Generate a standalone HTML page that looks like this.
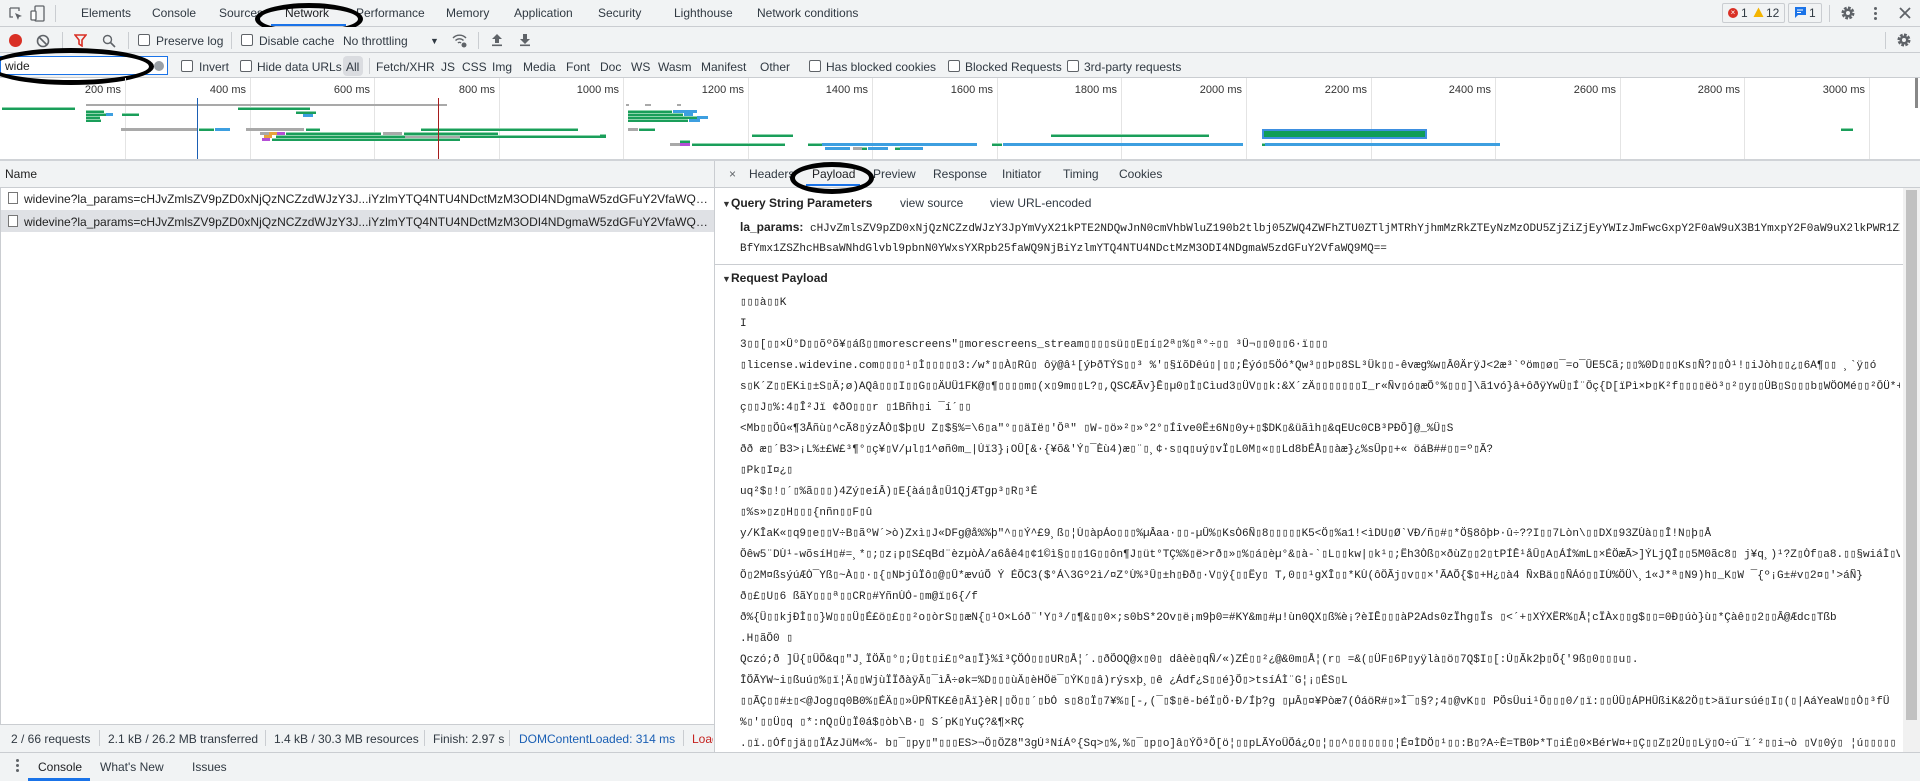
<!DOCTYPE html>
<html><head><meta charset="utf-8">
<style>
*{box-sizing:border-box;margin:0;padding:0}
body{width:1920px;height:781px;overflow:hidden;background:#fff;font-family:"Liberation Sans","DejaVu Sans",sans-serif;font-size:12px;color:#303942;position:relative}
.a{position:absolute;white-space:nowrap;line-height:14px}
.bg{position:absolute}
.hl{position:absolute;height:1px;background:#cacdd1}
.vl{position:absolute;width:1px;background:#cacdd1}
.cb{position:absolute;width:12px;height:12px;border:1px solid #5f6368;border-radius:2px;background:#fff}
.b{position:absolute;height:3px;background:#1a9e5a;border-top:1px solid #8fd3ad}
.bl{position:absolute;height:3px;background:#3d9fe0}
.gr{position:absolute;height:3px;background:#a9a9a9}
.lab{position:absolute;top:84px;font-size:11px;color:#333;text-align:right;width:60px}
.gl{position:absolute;top:78px;width:1px;height:81px;background:#e4e4e4}
.ell{position:absolute;border:5px solid #000;border-radius:50%}
.mono{font-family:"Liberation Mono","DejaVu Sans Mono",monospace;font-size:11px;color:#222}
.pl{position:absolute;left:740px;white-space:nowrap;width:1160px;overflow:hidden;line-height:14px}
.nm{width:688px;overflow:hidden;text-overflow:ellipsis}
</style></head><body>

<!-- Row 1 tabs -->
<div class="bg" style="left:0;top:0;width:1920px;height:27px;background:#f1f3f4"></div>
<div class="hl" style="left:0;top:26px;width:1920px"></div>
<svg class="bg" style="left:8px;top:6px" width="16" height="16" viewBox="0 0 16 16"><path d="M2 2h9v3M2 2v9h3" fill="none" stroke="#5f6368" stroke-width="1.3"/><path d="M7 7l7 3-3 1-1 3z" fill="#5f6368"/></svg>
<svg class="bg" style="left:30px;top:5px" width="16" height="17" viewBox="0 0 16 17"><rect x="5" y="1" width="9" height="15" rx="1" fill="none" stroke="#5f6368" stroke-width="1.3"/><rect x="1" y="6" width="5" height="9" rx="1" fill="#fff" stroke="#5f6368" stroke-width="1.3"/></svg>
<div class="vl" style="left:55px;top:5px;height:17px"></div>
<div class="a" style="left:81px;top:6px">Elements</div>
<div class="a" style="left:152px;top:6px">Console</div>
<div class="a" style="left:219px;top:6px">Sources</div>
<div class="a" style="left:285px;top:6px;color:#202124">Network</div>
<div class="bg" style="left:271px;top:24px;width:75px;height:2px;background:#1a73e8"></div>
<div class="a" style="left:356px;top:6px">Performance</div>
<div class="a" style="left:446px;top:6px">Memory</div>
<div class="a" style="left:514px;top:6px">Application</div>
<div class="a" style="left:598px;top:6px">Security</div>
<div class="a" style="left:674px;top:6px">Lighthouse</div>
<div class="a" style="left:757px;top:6px">Network conditions</div>
<div class="ell" style="left:255px;top:3px;width:108px;height:32px"></div>
<!-- right badges -->
<div class="bg" style="left:1722px;top:3px;width:63px;height:20px;border:1px solid #cacdd1;border-radius:2px"></div>
<div class="bg" style="left:1728px;top:8px;width:10px;height:10px;border-radius:50%;background:#d93025;color:#fff;font-size:8px;line-height:10px;text-align:center">×</div>
<div class="a" style="left:1741px;top:6px">1</div>
<svg class="bg" style="left:1753px;top:7px" width="11" height="11" viewBox="0 0 11 11"><path d="M5.5 0.5L10.5 10H0.5z" fill="#f4b400"/></svg>
<div class="a" style="left:1766px;top:6px">12</div>
<div class="bg" style="left:1788px;top:3px;width:34px;height:20px;border:1px solid #cacdd1;border-radius:2px"></div>
<svg class="bg" style="left:1795px;top:7px" width="11" height="12" viewBox="0 0 11 12"><path d="M0 0h11v8H3l-3 3z" fill="#1a73e8"/><path d="M2 3h6M2 5.5h4" stroke="#fff" stroke-width="1"/></svg>
<div class="a" style="left:1809px;top:6px">1</div>
<div class="vl" style="left:1829px;top:5px;height:17px"></div>
<svg class="bg" style="left:1840px;top:5px" width="16" height="16" viewBox="0 0 16 16"><circle cx="8" cy="8" r="5" fill="none" stroke="#5f6368" stroke-width="3" stroke-dasharray="2.6 1.3"/><circle cx="8" cy="8" r="4.5" fill="#5f6368"/><circle cx="8" cy="8" r="2" fill="#f1f3f4"/></svg>
<div class="bg" style="left:1874px;top:7px;width:3px;height:3px;border-radius:50%;background:#5f6368;box-shadow:0 5px 0 #5f6368,0 10px 0 #5f6368"></div>
<svg class="bg" style="left:1899px;top:7px" width="12" height="12" viewBox="0 0 12 12"><path d="M1 1l10 10M11 1L1 11" stroke="#5f6368" stroke-width="1.8"/></svg>

<!-- Row 2 toolbar -->
<div class="bg" style="left:0;top:27px;width:1920px;height:26px;background:#f1f3f4"></div>
<div class="hl" style="left:0;top:52px;width:1920px"></div>
<div class="bg" style="left:9px;top:34px;width:13px;height:13px;border-radius:50%;background:#d93025"></div>
<svg class="bg" style="left:36px;top:34px" width="14" height="14" viewBox="0 0 14 14"><circle cx="7" cy="7" r="5.5" fill="none" stroke="#5f6368" stroke-width="1.6"/><path d="M3 3l8 8" stroke="#5f6368" stroke-width="1.6"/></svg>
<div class="vl" style="left:62px;top:32px;height:17px"></div>
<svg class="bg" style="left:74px;top:34px" width="13" height="13" viewBox="0 0 13 13"><path d="M1 1h11L8 6v6L5 10V6z" fill="none" stroke="#d93025" stroke-width="1.6"/></svg>
<svg class="bg" style="left:102px;top:34px" width="14" height="14" viewBox="0 0 14 14"><circle cx="5.5" cy="5.5" r="4" fill="none" stroke="#5f6368" stroke-width="1.4"/><path d="M8.5 8.5l4.5 4.5" stroke="#5f6368" stroke-width="1.6"/></svg>
<div class="vl" style="left:128px;top:32px;height:17px"></div>
<div class="cb" style="left:138px;top:34px"></div>
<div class="a" style="left:156px;top:34px">Preserve log</div>
<div class="vl" style="left:231px;top:32px;height:17px"></div>
<div class="cb" style="left:241px;top:34px"></div>
<div class="a" style="left:259px;top:34px">Disable cache</div>
<div class="a" style="left:343px;top:34px">No throttling</div>
<div class="a" style="left:430px;top:34px;font-size:9px">▼</div>
<svg class="bg" style="left:452px;top:33px" width="16" height="15" viewBox="0 0 16 15"><path d="M1 5a9 9 0 0 1 13 0M3.5 7.5a5.5 5.5 0 0 1 8 0M6 10a2 2 0 0 1 3 0" fill="none" stroke="#5f6368" stroke-width="1.4"/><circle cx="12" cy="12" r="2.5" fill="#5f6368"/></svg>
<div class="vl" style="left:478px;top:32px;height:17px"></div>
<svg class="bg" style="left:491px;top:33px" width="12" height="14" viewBox="0 0 12 14"><path d="M6 1L1 6h3v4h4V6h3z" fill="#5f6368"/><rect x="1" y="11.5" width="10" height="1.6" fill="#5f6368"/></svg>
<svg class="bg" style="left:519px;top:33px" width="12" height="14" viewBox="0 0 12 14"><path d="M6 11L1 6h3V1h4v5h3z" fill="#5f6368"/><rect x="1" y="11.5" width="10" height="1.6" fill="#5f6368"/></svg>
<div class="vl" style="left:1885px;top:32px;height:17px"></div>
<svg class="bg" style="left:1896px;top:32px" width="16" height="16" viewBox="0 0 16 16"><circle cx="8" cy="8" r="5" fill="none" stroke="#5f6368" stroke-width="3" stroke-dasharray="2.6 1.3"/><circle cx="8" cy="8" r="4.5" fill="#5f6368"/><circle cx="8" cy="8" r="2" fill="#f1f3f4"/></svg>

<!-- Row 3 filter -->
<div class="bg" style="left:0;top:53px;width:1920px;height:25px;background:#f1f3f4"></div>
<div class="hl" style="left:0;top:77px;width:1920px"></div>
<div class="bg" style="left:0;top:56px;width:168px;height:19px;background:#fff;border:1px solid #1a73e8"></div>
<div class="a" style="left:5px;top:59px;color:#222">wide</div>
<div class="bg" style="left:154px;top:61px;width:10px;height:10px;border-radius:50%;background:#9aa0a6"></div>
<div class="ell" style="left:-12px;top:48px;width:166px;height:37px"></div>
<div class="cb" style="left:181px;top:60px"></div>
<div class="a" style="left:199px;top:60px">Invert</div>
<div class="cb" style="left:240px;top:60px"></div>
<div class="a" style="left:257px;top:60px">Hide data URLs</div>
<div class="bg" style="left:343px;top:56px;width:20px;height:20px;border-radius:4px;background:#dadce0"></div>
<div class="a" style="left:346px;top:60px">All</div>
<div class="vl" style="left:369px;top:58px;height:16px"></div>
<div class="a" style="left:376px;top:60px">Fetch/XHR</div>
<div class="a" style="left:441px;top:60px">JS</div>
<div class="a" style="left:462px;top:60px">CSS</div>
<div class="a" style="left:492px;top:60px">Img</div>
<div class="a" style="left:523px;top:60px">Media</div>
<div class="a" style="left:566px;top:60px">Font</div>
<div class="a" style="left:600px;top:60px">Doc</div>
<div class="a" style="left:631px;top:60px">WS</div>
<div class="a" style="left:658px;top:60px">Wasm</div>
<div class="a" style="left:701px;top:60px">Manifest</div>
<div class="a" style="left:760px;top:60px">Other</div>
<div class="cb" style="left:809px;top:60px"></div>
<div class="a" style="left:826px;top:60px">Has blocked cookies</div>
<div class="cb" style="left:948px;top:60px"></div>
<div class="a" style="left:965px;top:60px">Blocked Requests</div>
<div class="cb" style="left:1067px;top:60px"></div>
<div class="a" style="left:1084px;top:60px">3rd-party requests</div>

<!-- Timeline overview -->
<div class="gl" style="left:125px"></div><div class="gl" style="left:250px"></div><div class="gl" style="left:374px"></div><div class="gl" style="left:499px"></div><div class="gl" style="left:623px"></div><div class="gl" style="left:748px"></div><div class="gl" style="left:872px"></div><div class="gl" style="left:997px"></div><div class="gl" style="left:1121px"></div><div class="gl" style="left:1246px"></div><div class="gl" style="left:1371px"></div><div class="gl" style="left:1495px"></div><div class="gl" style="left:1620px"></div><div class="gl" style="left:1744px"></div><div class="gl" style="left:1869px"></div>
<div class="lab" style="left:61px">200 ms</div><div class="lab" style="left:186px">400 ms</div><div class="lab" style="left:310px">600 ms</div><div class="lab" style="left:435px">800 ms</div><div class="lab" style="left:559px">1000 ms</div><div class="lab" style="left:684px">1200 ms</div><div class="lab" style="left:808px">1400 ms</div><div class="lab" style="left:933px">1600 ms</div><div class="lab" style="left:1057px">1800 ms</div><div class="lab" style="left:1182px">2000 ms</div><div class="lab" style="left:1307px">2200 ms</div><div class="lab" style="left:1431px">2400 ms</div><div class="lab" style="left:1556px">2600 ms</div><div class="lab" style="left:1680px">2800 ms</div><div class="lab" style="left:1805px">3000 ms</div>
<div class="bg" style="left:1915px;top:78px;width:3px;height:30px;background:#888"></div>

<div class="b" style="left:2px;top:107px;width:73px"></div>
<div class="gr" style="left:86px;top:104px;width:361px;height:2px"></div>
<div class="b" style="left:238px;top:107px;width:72px"></div>
<div class="b" style="left:86px;top:110px;width:18px"></div>
<div class="b" style="left:86px;top:113px;width:20px"></div><div class="bl" style="left:106px;top:113px;width:7px"></div>
<div class="b" style="left:86px;top:116px;width:14px"></div>
<div class="b" style="left:122px;top:113px;width:17px"></div>
<div class="b" style="left:86px;top:119px;width:15px"></div>
<div class="b" style="left:296px;top:111px;width:20px"></div><div class="bl" style="left:303px;top:114px;width:10px"></div>
<div class="gr" style="left:121px;top:128px;width:77px"></div><div class="b" style="left:199px;top:128px;width:15px"></div><div class="bl" style="left:215px;top:128px;width:15px"></div>
<div class="gr" style="left:246px;top:128px;width:58px"></div><div class="b" style="left:306px;top:128px;width:14px"></div>
<div class="b" style="left:421px;top:128px;width:157px"></div>
<div class="gr" style="left:260px;top:132px;width:9px"></div><div class="bg" style="left:269px;top:132px;width:8px;height:3px;background:#e8a33c"></div><div class="bg" style="left:277px;top:132px;width:8px;height:3px;background:#b44fd6"></div>
<div class="b" style="left:286px;top:132px;width:95px"></div><div class="gr" style="left:383px;top:132px;width:19px"></div><div class="b" style="left:404px;top:132px;width:94px"></div>
<div class="bg" style="left:264px;top:135px;width:8px;height:3px;background:#e8a33c"></div><div class="b" style="left:276px;top:135px;width:330px"></div>
<div class="bg" style="left:262px;top:138px;width:8px;height:3px;background:#b44fd6"></div><div class="b" style="left:272px;top:138px;width:188px"></div>
<div class="gr" style="left:405px;top:136px;width:55px;height:2px"></div>
<div class="bg" style="left:197px;top:98px;width:1px;height:61px;background:#1a5fb4"></div>
<div class="bg" style="left:438px;top:98px;width:1px;height:61px;background:#a61c1c"></div>
<!-- 1200ms cluster -->
<div class="gr" style="left:626px;top:104px;width:3px;height:2px"></div><div class="gr" style="left:645px;top:104px;width:6px;height:2px"></div><div class="gr" style="left:677px;top:104px;width:4px;height:2px"></div>
<div class="b" style="left:628px;top:110px;width:44px"></div><div class="bl" style="left:673px;top:110px;width:24px"></div>
<div class="b" style="left:628px;top:113px;width:55px"></div><div class="bl" style="left:684px;top:113px;width:9px"></div>
<div class="b" style="left:628px;top:116px;width:69px"></div><div class="bl" style="left:697px;top:116px;width:11px"></div>
<div class="b" style="left:628px;top:119px;width:60px"></div><div class="bl" style="left:689px;top:119px;width:11px"></div>
<div class="gr" style="left:628px;top:128px;width:10px"></div><div class="b" style="left:639px;top:128px;width:16px"></div>
<div class="b" style="left:600px;top:134px;width:6px"></div>
<div class="b" style="left:752px;top:134px;width:41px"></div>
<div class="b" style="left:1051px;top:134px;width:158px"></div>
<div class="bg" style="left:1262px;top:129px;width:165px;height:10px;background:#0f9d58;border:2px solid #3d8fe0"></div>
<div class="b" style="left:680px;top:140px;width:10px"></div>
<div class="gr" style="left:670px;top:143px;width:10px"></div><div class="bg" style="left:680px;top:143px;width:10px;height:3px;background:#b44fd6"></div><div class="b" style="left:692px;top:143px;width:93px"></div>
<div class="b" style="left:808px;top:143px;width:14px"></div><div class="bl" style="left:822px;top:143px;width:155px"></div>
<div class="b" style="left:992px;top:143px;width:10px"></div><div class="bl" style="left:1003px;top:143px;width:240px"></div>
<div class="b" style="left:1262px;top:143px;width:3px"></div><div class="bl" style="left:1265px;top:143px;width:235px"></div>
<div class="bl" style="left:825px;top:147px;width:25px"></div><div class="gr" style="left:853px;top:147px;width:9px"></div><div class="b" style="left:862px;top:147px;width:5px"></div><div class="bl" style="left:868px;top:147px;width:20px"></div><div class="b" style="left:895px;top:147px;width:5px"></div><div class="bl" style="left:900px;top:147px;width:23px"></div>
<div class="b" style="left:1841px;top:128px;width:12px"></div>
<div class="hl" style="left:0;top:159px;width:1920px;height:2px;background:#d0d3d7"></div>

<!-- Left panel -->
<div class="bg" style="left:0;top:161px;width:714px;height:26px;background:#f1f3f4"></div>
<div class="a" style="left:5px;top:167px;color:#222">Name</div>
<div class="hl" style="left:0;top:187px;width:714px"></div>
<div class="bg" style="left:0;top:210px;width:714px;height:22px;background:#dfe1e5"></div>
<div class="bg" style="left:8px;top:192px;width:10px;height:12px;border:1px solid #777;background:#fff"></div>
<div class="a nm" style="left:24px;top:192px;color:#222">widevine?la_params=cHJvZmlsZV9pZD0xNjQzNCZzdWJzY3J...iYzlmYTQ4NTU4NDctMzM3ODI4NDgmaW5zdGFuY2VfaWQ9MQ...</div>
<div class="bg" style="left:8px;top:215px;width:10px;height:12px;border:1px solid #777;background:#fff"></div>
<div class="a nm" style="left:24px;top:215px;color:#222">widevine?la_params=cHJvZmlsZV9pZD0xNjQzNCZzdWJzY3J...iYzlmYTQ4NTU4NDctMzM3ODI4NDgmaW5zdGFuY2VfaWQ9MQ...</div>
<div class="vl" style="left:714px;top:161px;height:591px"></div>
<div class="vl" style="left:0;top:187px;height:538px"></div>
<!-- status bar -->
<div class="bg" style="left:0;top:724px;width:714px;height:28px;background:#f1f3f4;border-top:1px solid #cacdd1"></div>
<div class="a" style="left:11px;top:732px">2 / 66 requests</div>
<div class="vl" style="left:99px;top:730px;height:16px"></div>
<div class="a" style="left:108px;top:732px">2.1 kB / 26.2 MB transferred</div>
<div class="vl" style="left:265px;top:730px;height:16px"></div>
<div class="a" style="left:274px;top:732px">1.4 kB / 30.3 MB resources</div>
<div class="vl" style="left:424px;top:730px;height:16px"></div>
<div class="a" style="left:433px;top:732px">Finish: 2.97 s</div>
<div class="vl" style="left:509px;top:730px;height:16px"></div>
<div class="a" style="left:519px;top:732px;color:#1a5fb4">DOMContentLoaded: 314 ms</div>
<div class="vl" style="left:683px;top:730px;height:16px"></div>
<div class="a" style="left:692px;top:732px;color:#c5221f;width:21px;overflow:hidden">Load</div>

<!-- Right panel -->
<div class="bg" style="left:715px;top:161px;width:1205px;height:26px;background:#f1f3f4"></div>
<div class="hl" style="left:715px;top:187px;width:1205px"></div>
<div class="a" style="left:729px;top:167px;color:#5f6368">×</div>
<div class="a" style="left:749px;top:167px">Headers</div>
<div class="a" style="left:812px;top:167px;color:#202124">Payload</div>
<div class="bg" style="left:806px;top:184px;width:54px;height:2px;background:#1a73e8"></div>
<div class="a" style="left:873px;top:167px">Preview</div>
<div class="a" style="left:933px;top:167px">Response</div>
<div class="a" style="left:1002px;top:167px">Initiator</div>
<div class="a" style="left:1063px;top:167px">Timing</div>
<div class="a" style="left:1119px;top:167px">Cookies</div>
<div class="ell" style="left:790px;top:162px;width:84px;height:32px"></div>

<div class="a" style="left:722px;top:197px;font-size:9px;color:#333">▼</div>
<div class="a" style="left:731px;top:196px;font-weight:bold;color:#222">Query String Parameters</div>
<div class="a" style="left:900px;top:196px">view source</div>
<div class="a" style="left:990px;top:196px">view URL-encoded</div>
<div class="a mono" style="left:740px;top:220px;width:1160px;overflow:hidden"><span style="font-family:'Liberation Sans',sans-serif;font-size:12px;font-weight:bold;color:#222">la_params:</span> cHJvZmlsZV9pZD0xNjQzNCZzdWJzY3JpYmVyX21kPTE2NDQwJnN0cmVhbWluZ190b2tlbj05ZWQ4ZWFhZTU0ZTljMTRhYjhmMzRkZTEyNzMzODU5ZjZiZjEyYWIzJmFwcGxpY2F0aW9uX3B1YmxpY2F0aW9uX2lkPWR1ZX</div>
<div class="a mono" style="left:740px;top:242px">BfYmx1ZSZhcHBsaWNhdGlvbl9pbnN0YWxsYXRpb25faWQ9NjBiYzlmYTQ4NTU4NDctMzM3ODI4NDgmaW5zdGFuY2VfaWQ9MQ==</div>
<div class="hl" style="left:715px;top:264px;width:1188px"></div>
<div class="a" style="left:722px;top:272px;font-size:9px;color:#333">▼</div>
<div class="a" style="left:731px;top:271px;font-weight:bold;color:#222">Request Payload</div>

<div class="mono">
<div class="pl" style="top:296px">▯▯▯à▯▯K</div>
<div class="pl" style="top:317px">I</div>
<div class="pl" style="top:338px">3▯▯[▯▯×Û°D▯▯õºõ¥▯áß▯▯morescreens"▯morescreens_stream▯▯▯▯sü▯▯E▯í▯2ª▯%▯ª°÷▯▯ ³Û¬▯▯0▯▯6·ï▯▯▯</div>
<div class="pl" style="top:359px">▯license.widevine.com▯▯▯▯¹▯Ì▯▯▯▯▯3:/w*▯▯À▯Rû▯   ôÿ@â¹[ýÞðTÝS▯▯³ %'▯§ïõDêú▯|▯▯;Êýó▯5Öó*Qw³▯▯Þ▯8SL³Ük▯▯-êvæg%w▯Â0ÄrÿJ<2æ³`ºöm▯ø▯¯=o¯ÛE5Cã;▯▯%0D▯▯▯Ks▯Ñ?▯▯Ò¹!▯iJòh▯▯¿▯6A¶▯▯ ¸`ÿ▯ó</div>
<div class="pl" style="top:380px">s▯K´Z▯▯EKi▯±S▯Ä;ø)AQâ▯▯▯I▯▯G▯▯ÄUÜ1FK@▯¶▯▯▯▯m▯(x▯9m▯▯L?▯,QSCÆÃv}Ê▯µ0▯Ì▯Cìud3▯ÜV▯▯k:&X´zÄ▯▯▯▯▯▯▯I_r«Ñv▯ó▯æÕ°%▯▯▯]\ã1vó}â+ôðÿYwÜ▯Í¨Ôç{D[ïPì×Þ▯K²f▯▯▯▯ëö³▯²▯y▯▯ÜB▯S▯▯▯b▯WÖOMé▯▯²ÔÜ*+h</div>
<div class="pl" style="top:401px">ç▯▯J▯%:4▯Î²Jï ¢ðO▯▯▯r ▯1Bñh▯i ¯í´▯▯</div>
<div class="pl" style="top:422px">&lt;Mb▯▯Õû«¶3Åñù▯^cÃ8▯ýzÅÒ▯$þ▯U    Z▯$§%=\6▯a"°▯▯äIë▯'Ôª" ▯W-▯ö»²▯»°2°▯Íîve0Ë±6N▯0y+▯$DK▯&üãìh▯&qEUc0CB³PÐÔ]@_%Ü▯S</div>
<div class="pl" style="top:443px">ðð æ▯´B3>¡L%±£W£³¶°▯ç¥▯V/µl▯1^øñ0m_|Úï3}¡OÛ[&·{¥õ&'Ý▯¯Èù4)æ▯¨▯¸¢·s▯q▯uý▯vÏ▯L0M▯«▯▯Ld8bÉÅ▯▯àæ}¿%sÛp▯+«  öáB##▯▯=º▯Ã?</div>
<div class="pl" style="top:464px">▯Pk▯I¤¿▯</div>
<div class="pl" style="top:485px">uq²$▯!▯´▯%ã▯▯▯)4Zý▯eíÂ)▯E{àá▯å▯Û1QjÆTgp³▯R▯³É</div>
<div class="pl" style="top:506px">▯%s»▯z▯H▯▯▯{nñn▯▯F▯û</div>
<div class="pl" style="top:527px">y/KÎaK«▯q9▯e▯▯V÷B▯ãºW´>ò)Zxì▯J«DFg@å%%þ"^▯▯Ý^£9¸ß▯¦Ù▯àpÁo▯▯▯%µÂaa·▯▯-µÛ%▯KsÒ6Ñ▯8▯▯▯▯▯K5&lt;Ö▯%a1!&lt;ìDU▯Ø`VÐ/ñ▯#▯*Ö§8ôþÞ·û÷??I▯▯7Lòn\▯▯DX▯93ZÙà▯▯Î!N▯þ▯Å</div>
<div class="pl" style="top:548px">Ôêw5¨DÙ¹-wõsíH▯#=¸*▯;▯z¡p▯S£qBd¨èzµòÀ/a6åê4▯¢1©ì§▯▯▯1G▯▯ôn¶J▯üt°TÇ%%▯ë>rð▯»▯%▯á▯èµ°&▯à-`▯L▯▯kw|▯k¹▯;Ëh3Òß▯×ðùZ▯▯2▯tPÍÊ¹åÛ▯A▯ÁÍ%mL▯×ÉÖæÃ>]ÝLjQÎ▯▯5M0ãc8▯ j¥q¸)¹?Z▯Òf▯a8.▯▯§wiáÌ▯V</div>
<div class="pl" style="top:569px">Ô▯2M¤ßsýúÆÒ¯Yß▯~À▯▯·▯{▯NÞjûÏô▯@▯Û*ævúÕ Ý ÉÕC3($°Á\3Gº2ì/¤Z°Ù%³Û▯±h▯Ðð▯·V▯ÿ{▯▯Ëy▯ T,0▯▯¹gXÎ▯▯*KÙ(ôÖÃj▯v▯▯×'ÃAÕ{$▯+H¿▯à4 ÑxBä▯▯ÑÁó▯▯IÙ%ÖÜ\¸1«J*ª▯N9)h▯_K▯W ¯{º¡G±#v▯2¤▯'>áÑ}</div>
<div class="pl" style="top:590px">ð▯£▯U▯6 ßãY▯▯▯ª▯▯CR▯#YñnÙÓ-▯m@ï▯6{/f</div>
<div class="pl" style="top:611px">ð%{Ü▯▯kjÐÌ▯▯}W▯▯▯Ü▯É£ö▯£▯▯²o▯òrS▯▯æN{▯¹O×Lóð¨'Y▯³/▯¶&▯▯0×;s0bS*2Ov▯ë¡m9þ0=#KY&m▯#µ!ùn0QX▯ß%è¡?èIÊ▯▯▯àP2Ads0zÏhg▯Ïs ▯<´+▯XÝXËR%▯Å¦cÏÀx▯▯g$▯▯=0Ð▯úò}ù▯*Çàê▯▯2▯▯Â@Ædc▯Tßb</div>
<div class="pl" style="top:632px">.H▯ãÔ0  ▯</div>
<div class="pl" style="top:653px">Qczó;ð ]Ü{▯ÜÕ&q▯"J¸ÏÖÃ▯°▯;Ü▯t▯i£▯ºa▯Ï}%î³ÇÖÓ▯▯▯UR▯Å¦´.▯ðÕOQ@x▯0▯ dâèè▯qÑ/«)ZÉ▯▯²¿@&0m▯Å¦(r▯ =&(▯ÜF▯6P▯yÿlà▯ö▯7Q$I▯[:Ú▯Ãk2þ▯Õ{'9ß▯0▯▯▯u▯.</div>
<div class="pl" style="top:674px">ÎÕÃYW~i▯ßuú▯%▯ï¦Ä▯▯WjùÏÏðàÿÃ▯¯ìÂ÷øk=%D▯▯▯ùÄ▯èHÖë¯▯ÝK▯▯â)rýsxþ¸▯ê    ¿Ádf¿S▯▯é}Õ▯>tsíÁÌ¨G¦¡▯ÉS▯L</div>
<div class="pl" style="top:695px">▯▯ÃÇ▯▯#±▯&lt;@Jog▯q0B0%▯ÉÄ▯▯»ÜPÑTK£ê▯Âï}èR|▯Ö▯▯´▯bÓ s▯8▯Ï▯7¥%▯[-,(¯▯$▯ë-béÏ▯Ö·Ð/Íþ?g ▯µÂ▯¤¥Pòæ7(ÓáöR#▯»Ì¯▯§?;4▯@vK▯▯   PÕsÜui¹Õ▯▯▯0/▯ï:▯▯ÜÜ▯ÁPHÜßiK&2Ö▯t>äïursúé▯I▯(▯|AáYeaW▯▯Ò▯³fÜ</div>
<div class="pl" style="top:716px">%▯'▯▯Ü▯q ▯*:nQ▯Ü▯Ï0á$▯òb\B·▯ S´pK▯YuÇ?&¶×RÇ</div>
<div class="pl" style="top:737px">.▯ï.▯Óf▯jä▯▯ÏÅzJüM«%- b▯¯▯py▯"▯▯▯ES>¬Ö▯ÖZ8"3gÚ³NíÁº{Sq>▯%,%▯¯▯p▯o]â▯ÝÖ³Ô[ö¦▯▯pLÃYoÜÕá¿O▯¦▯▯^▯▯▯▯▯▯▯¦É¤ÌDÖ▯¹▯▯:B▯?A÷È=TB0Þ*T▯iÉ▯0×BérW¤+▯Ç▯▯Z▯2Ü▯▯Lÿ▯O÷ú¯ï´²▯▯i¬ò ▯V▯0ý▯ ¦ú▯▯▯▯▯</div>
</div>
<!-- scrollbar -->
<div class="bg" style="left:1903px;top:188px;width:17px;height:564px;background:#f1f1f1"></div>
<div class="bg" style="left:1906px;top:190px;width:11px;height:530px;background:#c1c1c1"></div>

<!-- drawer -->
<div class="bg" style="left:0;top:752px;width:1920px;height:29px;background:#f1f3f4;border-top:1px solid #cacdd1"></div>
<div class="bg" style="left:16px;top:759px;width:3px;height:3px;border-radius:50%;background:#5f6368;box-shadow:0 5px 0 #5f6368,0 10px 0 #5f6368"></div>
<div class="a" style="left:38px;top:760px;color:#202124">Console</div>
<div class="bg" style="left:28px;top:778px;width:62px;height:3px;background:#1a73e8"></div>
<div class="a" style="left:100px;top:760px">What's New</div>
<div class="a" style="left:192px;top:760px">Issues</div>
</body></html>
